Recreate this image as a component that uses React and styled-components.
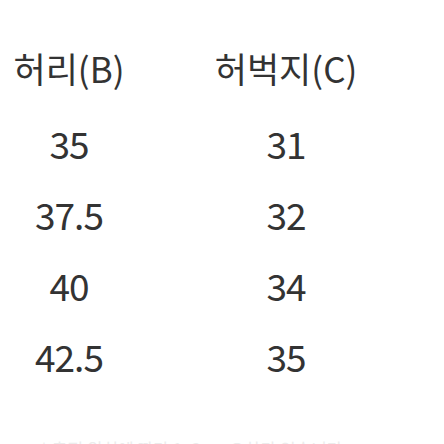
import styled, { createGlobalStyle } from 'styled-components'

const GlobalStyle = createGlobalStyle`
  html, body {
    margin: 0;
    padding: 0;
    background: #ffffff;
  }
  body {
    width: 444px;
    height: 444px;
    overflow: hidden;
  }
`

const Page = styled.div`
  width: 444px;
  height: 444px;
  overflow: hidden;
  display: flex;
  flex-direction: column;
  font-family: 'Noto Sans CJK KR', 'Noto Sans', sans-serif;
  color: #333333;
`

const Table = styled.div`
  display: grid;
  grid-template-columns: 138px 296px;
  padding-top: 26px;
`

const Cell = styled.div`
  display: flex;
  align-items: center;
  justify-content: center;
  font-size: ${({ $head }) => ($head ? '35px' : '37px')};
  font-weight: 400;
  letter-spacing: ${({ $head }) => ($head ? '0' : '-1px')};
  line-height: 1;
  height: ${({ $head }) => ($head ? '82px' : '71px')};
`

const Note = styled.div`
  margin-top: auto;
  padding-left: 40px;
  height: 4px;
  font-size: 17px;
  line-height: 1;
  color: #ececec;
  white-space: nowrap;
`

const rows = [
  ['35', '31'],
  ['37.5', '32'],
  ['40', '34'],
  ['42.5', '35'],
]

const App = () => {
  return (
    <>
      <GlobalStyle />
      <Page>
        <Table>
          <Cell $head>허리(B)</Cell>
          <Cell $head>허벅지(C)</Cell>
          {rows.map(([waist, thigh]) => [
            <Cell key={`w${waist}`}>{waist}</Cell>,
            <Cell key={`t${waist}`}>{thigh}</Cell>,
          ])}
        </Table>
        <Note>* 측정 위치에 따라 1~2cm 오차가 있습니다</Note>
      </Page>
    </>
  )
}

export default App
